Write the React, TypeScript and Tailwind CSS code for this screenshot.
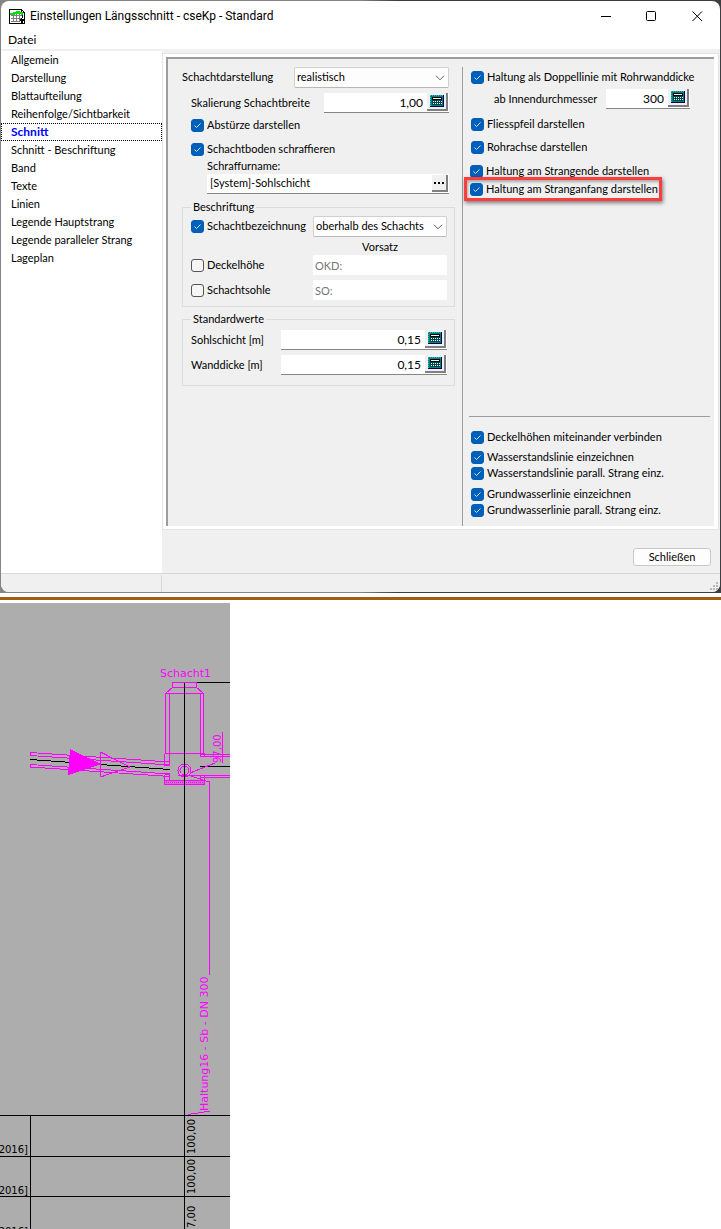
import { useState, type ReactNode } from 'react'

interface CheckProps {
  label: string
  defaultChecked?: boolean
}

interface NumberFieldProps {
  id: string
  value: string
  className?: string
}

const sections = [
  'Allgemein',
  'Darstellung',
  'Blattaufteilung',
  'Reihenfolge/Sichtbarkeit',
  'Schnitt',
  'Schnitt - Beschriftung',
  'Band',
  'Texte',
  'Linien',
  'Legende Hauptstrang',
  'Legende paralleler Strang',
  'Lageplan',
]

function Check({ label, defaultChecked = false }: CheckProps) {
  return (
    <label className="flex h-4 items-center gap-[3px] whitespace-nowrap">
      <span className="relative flex h-[13px] w-[13px] shrink-0">
        <input
          type="checkbox"
          defaultChecked={defaultChecked}
          className="peer h-[13px] w-[13px] appearance-none rounded-[3px] border border-[#555] bg-[#f5f5f5] checked:border-[#005fb8] checked:bg-[#005fb8]"
        />
        <svg
          viewBox="0 0 13 13"
          className="pointer-events-none absolute inset-0 hidden h-[13px] w-[13px] peer-checked:block"
          fill="none"
          stroke="#cfe3f6"
        >
          <path d="M3.5 6.5 5.5 8.5 9.5 4.5" />
        </svg>
      </span>
      {label}
    </label>
  )
}

function CalculatorIcon() {
  return (
    <svg viewBox="0 0 14 12" className="h-3 w-[14px]" shapeRendering="crispEdges">
      <rect width="14" height="12" fill="#000050" />
      <rect width="13" height="11" fill="#008080" />
      <path d="M0 .5h13M.5 0v11" stroke="#20c0c0" strokeDasharray="1 1" />
      <rect x="2" y="2" width="10" height="3" fill="#000" />
      <rect x="3" y="3" width="8" height="1" fill="#e8f4f4" />
      <rect x="2" y="5" width="10" height="5" fill="#004848" />
      <path d="M3 6.5h9M3 8.5h9" stroke="#fff" strokeDasharray="1 1" />
    </svg>
  )
}

function NumberField({ id, value, className = '' }: NumberFieldProps) {
  return (
    <div className={`flex h-5 border-b border-[#858585] bg-white ${className}`}>
      <input id={id} defaultValue={value} className="min-w-0 flex-1 bg-transparent pr-1 text-right text-xs outline-none" />
      <button
        type="button"
        aria-label="Rechner"
        className="mr-px mb-px flex w-[21px] items-center justify-center border-r-2 border-b-2 border-[#808080] bg-[#f0f0f0]"
      >
        <CalculatorIcon />
      </button>
    </div>
  )
}

function Dropdown({ label, value, id, className }: { label: string; value: string; id: string; className: string }) {
  return (
    <div className={`relative ${className}`}>
      <select
        id={id}
        aria-label={label}
        className="h-[21px] w-full appearance-none rounded-xs border border-[#d0d0d0] border-b-[#b8b8b8] bg-[#fdfdfd] pl-[2px]"
      >
        <option>{value}</option>
      </select>
      <svg viewBox="0 0 10 6" className="pointer-events-none absolute top-2 right-1 h-[6px] w-[10px]" fill="none" stroke="#606060">
        <path d="M1 .8 5 4.8 9 .8" />
      </svg>
    </div>
  )
}

function Group({ title, children }: { title: string; children: ReactNode }) {
  return (
    <fieldset className="border border-[#dcdcdc] pr-[7px] pl-2">
      <legend className="px-[2px] leading-4">{title}</legend>
      {children}
    </fieldset>
  )
}

function TitleBar() {
  return (
    <header className="flex h-[30px] items-center pr-[17px] pl-2">
      <svg viewBox="0 0 16 15" className="h-[15px] w-4" shapeRendering="crispEdges">
        <path d="M.5.5h12l3 3v11H.5z" fill="#fff" stroke="#000" />
        <path d="M12.5.5v3h3" fill="none" stroke="#000" />
        <path d="M2 6.5h11M2 9.5h11M2 12.5h9M4.5 5v8M7.5 5v8M10.5 5v8" stroke="#808080" />
        <path d="M2 5.5V4.5h3V3.5h3V2.5h2v1h3v2" fill="none" stroke="#00e000" strokeWidth="2" />
        <path d="M13.5 6v3M12.5 9v2" stroke="#000" />
        <path d="M11 10h4v2h-1v2h-2v-2h-1z" fill="#000" />
      </svg>
      <h1 className="ml-[5px] flex-1 font-[Roboto,'Noto_Sans',sans-serif] text-xs text-black">
        Einstellungen Längsschnitt - cseKp - Standard
      </h1>
      <div className="flex gap-[35px]">
        <button type="button" aria-label="Minimieren">
          <svg viewBox="0 0 11 11" className="h-[11px] w-[11px]" stroke="#000">
            <path d="M1 5.5h10" />
          </svg>
        </button>
        <button type="button" aria-label="Maximieren">
          <svg viewBox="0 0 11 11" className="h-[11px] w-[11px]" fill="none" stroke="#000">
            <rect x=".5" y=".5" width="9" height="9" rx="1" />
          </svg>
        </button>
        <button type="button" aria-label="Fenster schließen">
          <svg viewBox="0 0 11 11" className="h-[11px] w-[11px]" stroke="#000">
            <path d="M.5.5l9.5 9.5M10 .5l-9.5 9.5" />
          </svg>
        </button>
      </div>
    </header>
  )
}

function ShaftSettings() {
  return (
    <div className="w-[273px] shrink-0">
      <div className="flex items-center justify-between pr-[6px]">
        <label htmlFor="darstellung">Schachtdarstellung</label>
        <Dropdown id="darstellung" label="Schachtdarstellung" value="realistisch" className="w-[155px]" />
      </div>
      <div className="mt-[5px] flex items-center justify-between pr-[6px] pl-[9px]">
        <label htmlFor="skalierung">Skalierung Schachtbreite</label>
        <NumberField id="skalierung" value="1,00" className="w-[125px]" />
      </div>
      <div className="mt-1 flex flex-col gap-2 pl-[9px]">
        <Check label="Abstürze darstellen" defaultChecked />
        <Check label="Schachtboden schraffieren" defaultChecked />
      </div>
      <div className="mt-px pr-[6px] pl-[25px]">
        <label htmlFor="schraffur" className="block leading-4">
          Schraffurname:
        </label>
        <div className="flex h-5 border-b border-[#858585] bg-white">
          <input id="schraffur" defaultValue="[System]-Sohlschicht" className="min-w-0 flex-1 bg-transparent pl-[3px] outline-none" />
          <button
            type="button"
            aria-label="Schraffur auswählen"
            className="my-px mr-px flex w-4 items-center justify-center gap-[2px] border-r-2 border-b-2 border-[#808080] bg-[#f0f0f0]"
          >
            <span className="h-[2px] w-[2px] bg-black" />
            <span className="h-[2px] w-[2px] bg-black" />
            <span className="h-[2px] w-[2px] bg-black" />
          </button>
        </div>
      </div>

      <div className="mt-[5px]">
        <Group title="Beschriftung">
          <div className="mt-px flex items-center justify-between">
            <Check label="Schachtbezeichnung" defaultChecked />
            <Dropdown id="bezeichnung" label="Lage der Schachtbezeichnung" value="oberhalb des Schachts" className="w-[134px]" />
          </div>
          <div className="mt-[2px] ml-auto w-[134px] text-center leading-4">Vorsatz</div>
          <div className="flex items-center justify-between">
            <Check label="Deckelhöhe" />
            <input disabled aria-label="Vorsatz Deckelhöhe" value="OKD:" className="h-5 w-[134px] bg-white pl-[2px] text-[#777]" />
          </div>
          <div className="mt-[5px] mb-[6px] flex items-center justify-between">
            <Check label="Schachtsohle" />
            <input disabled aria-label="Vorsatz Schachtsohle" value="SO:" className="h-5 w-[134px] bg-white pl-[2px] text-[#777]" />
          </div>
        </Group>
      </div>

      <div className="mt-1">
        <Group title="Standardwerte">
          <div className="mt-[3px] flex items-center justify-between">
            <label htmlFor="sohlschicht">Sohlschicht [m]</label>
            <NumberField id="sohlschicht" value="0,15" className="w-[166px]" />
          </div>
          <div className="mt-[5px] mb-[10px] flex items-center justify-between">
            <label htmlFor="wanddicke">Wanddicke [m]</label>
            <NumberField id="wanddicke" value="0,15" className="w-[166px]" />
          </div>
        </Group>
      </div>
    </div>
  )
}

function PipeSettings() {
  return (
    <div className="ml-[7px] flex flex-1 flex-col border-l border-[#9d9d9d] pr-1 pl-[6px]">
      <div className="pt-[2px] pl-[2px]">
        <Check label="Haltung als Doppellinie mit Rohrwanddicke" defaultChecked />
        <div className="mt-1 flex items-center pl-[23px]">
          <label htmlFor="innendurchmesser" className="w-28">
            ab Innendurchmesser
          </label>
          <NumberField id="innendurchmesser" value="300" className="w-[84px]" />
        </div>
        <div className="mt-[7px] flex flex-col gap-[7px]">
          <Check label="Fliesspfeil darstellen" defaultChecked />
          <Check label="Rohrachse darstellen" defaultChecked />
        </div>
      </div>
      <div className="mt-2 pl-px">
        <Check label="Haltung am Strangende darstellen" defaultChecked />
      </div>
      <div className="relative -mt-[2px] -ml-[5px] w-[198px] border-3 border-[#fa3e3e] py-px pl-[3px] shadow-[1px_2px_4px_rgba(0,0,0,0.5),inset_1px_2px_3px_rgba(0,0,0,0.3)]">
        <Check label="Haltung am Stranganfang darstellen" defaultChecked />
      </div>

      <div className="mt-auto border-t border-[#9d9d9d] pt-3 pb-2 pl-[2px]">
        <Check label="Deckelhöhen miteinander verbinden" defaultChecked />
        <div className="mt-1">
          <Check label="Wasserstandslinie einzeichnen" defaultChecked />
          <Check label="Wasserstandslinie parall. Strang einz." defaultChecked />
        </div>
        <div className="mt-[5px]">
          <Check label="Grundwasserlinie einzeichnen" defaultChecked />
          <Check label="Grundwasserlinie parall. Strang einz." defaultChecked />
        </div>
      </div>
    </div>
  )
}

function SectionDrawing() {
  return (
    <svg
      viewBox="0 603 230 626"
      className="block h-[626px] w-[230px] bg-[#adadad] font-['DejaVu_Sans',sans-serif] text-[10px]"
      fill="none"
      role="img"
      aria-label="Schacht1"
    >
      <g stroke="#000" shapeRendering="crispEdges">
        <path d="M197 682.5h33M30.5 1115v114M0 1115.5h230M0 1156.5h230M0 1196.5h230" />
        <path d="M30 759.5 170 769.5M200 766.5h30" />
      </g>
      <g stroke="#f0f" shapeRendering="crispEdges">
        {/* Schacht */}
        <path d="M172.5 687.5v-5h24v5zM172.5 687.5l-7 6h38l-7-6M170.5 688.5l-5 5M198.5 688.5l5 5" />
        <path d="M165.5 693v60M169.5 693v60M200.5 693v60M203.5 693v60" />
        <path d="M164.5 753.5h40v3M164.5 753.5v12h5v-12M200.5 753v3.5h4" />
        <path d="M164.5 774.5h5v6M164.5 774.5v6h40v-6M200.5 775v5" />
        <path d="M200.5 754.5h30M200 756.5h30M178 775.5h52M200 777.5h30" />
        <rect x="164.5" y="780.5" width="40" height="4" fill="#c873c8" />
        <path d="M166 782.5h38" strokeDasharray="1 1" />
        <circle cx="184.5" cy="770.5" r="6.5" />
        <circle cx="184.5" cy="770.5" r="4.5" />
        <path d="M188 775l12 4 9.5 3v193" />
        <path d="M190 773 215 763M222.5 732v31" />
        {/* Haltung */}
        <path d="M30.5 752.5v3M30 752.5 170 762M30 755.5 170 765M30.5 764.5v3M30 764.5 170 774M30 767 170 776.5" />
        <path d="M100.5 752v25M100.5 752 130 767 100.5 777" />
        <path d="M70.5 750 100 764 68.5 774.5z" fill="#f0f" />
        <path d="M188 1114.5 198 1113 210 1111" />
      </g>
      <path d="M184.5 683v546" stroke="#000" shapeRendering="crispEdges" />
      <g fill="#f0f">
        <text x="160" y="677" className="text-[11px]">
          Schacht1
        </text>
        <text transform="translate(208 1111) rotate(-90)" className="text-[11px]">
          Haltung16 - Sb - DN 300
        </text>
        <text transform="translate(221 763) rotate(-90)">97,00</text>
      </g>
      <g fill="#000">
        <text transform="translate(195 1154) rotate(-90)">100,00</text>
        <text transform="translate(195 1194) rotate(-90)">100,00</text>
        <text transform="translate(195 1228) rotate(-90)">7,00</text>
        <text x="28" y="1153" textAnchor="end">
          2016]
        </text>
        <text x="28" y="1194" textAnchor="end">
          2016]
        </text>
        <text x="28" y="1235" textAnchor="end">
          2016]
        </text>
      </g>
    </svg>
  )
}

export default function App() {
  const [active, setActive] = useState('Schnitt')

  return (
    <main className="bg-white font-[Lato,'Liberation_Sans',sans-serif] text-[11px] text-black">
      <div className="bg-linear-to-r from-[#858585] from-50% to-[#3a3d42] to-55% p-px">
        <div className="overflow-hidden rounded-lg bg-white">
          <TitleBar />
          <nav className="flex h-[18px] items-center pl-[7px]">
            <button type="button" className="text-xs">
              Datei
            </button>
          </nav>
          <div className="flex border-t-2 border-[#f0f0f0]">
            <ul className="w-[161px] shrink-0">
              {sections.map((name) => (
                <li key={name}>
                  <button
                    type="button"
                    onClick={() => setActive(name)}
                    className={`flex h-[18px] w-full items-center border px-[9px] ${
                      name === active ? 'border-dotted border-black text-xs font-bold text-[#0000ff]' : 'border-transparent'
                    }`}
                  >
                    {name}
                  </button>
                </li>
              ))}
            </ul>
            <div className="min-w-0 flex-1 bg-[#f0f0f0]">
              <div className="mt-[2px] mr-px border border-[#e3e3e3] bg-white p-[3px] pr-1">
                <div className="flex border-t-2 border-l-2 border-[#9d9d9d] bg-[#f0f0f0] pt-2 pl-[14px]">
                  <div className="flex min-h-[459px] flex-1">
                    <ShaftSettings />
                    <PipeSettings />
                  </div>
                </div>
              </div>
              <div className="flex justify-end pt-[18px] pr-[9px] pb-[7px]">
                <button type="button" className="h-[18px] w-[78px] rounded-[3px] border border-[#c8c8c8] bg-[#fdfdfd]">
                  Schließen
                </button>
              </div>
            </div>
          </div>
          <footer className="flex h-[19px] items-end justify-between border-t border-[#d7d7d7] bg-[#f0f0f0]">
            <span className="h-[17px] w-[161px] border-r border-[#d7d7d7]" />
            <svg viewBox="0 0 9 9" className="m-px h-[9px] w-[9px]" fill="#b8b8b8">
              <path d="M6 0h2v2H6zM3 3h2v2H3zM6 3h2v2H6zM0 6h2v2H0zM3 6h2v2H3zM6 6h2v2H6z" />
            </svg>
          </footer>
        </div>
      </div>
      <hr className="mt-1 mb-[3px] border-t-3 border-[#a65b10]" />
      <SectionDrawing />
    </main>
  )
}
